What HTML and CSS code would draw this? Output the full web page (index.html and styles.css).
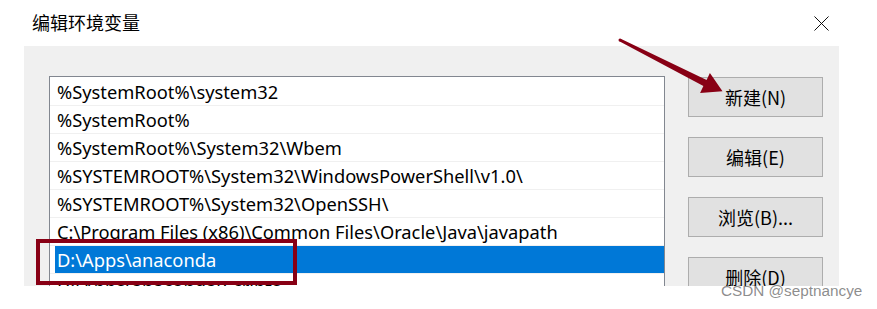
FILE: index.html
```html
<!DOCTYPE html>
<html lang="zh-CN">
<head>
  <meta charset="UTF-8">
  <meta name="viewport" content="width=device-width, initial-scale=1.0">
  <title>编辑环境变量</title>
  <link rel="stylesheet" href="styles.css">
</head>
<body>
  <div class="window">
    <div class="titlebar">
      <span class="title">编辑环境变量</span>
      <svg class="close" width="16" height="16" viewBox="0 0 16 16">
        <path d="M0.5 0.5 L15.5 15.5 M15.5 0.5 L0.5 15.5" stroke="#000" stroke-width="1" fill="none"/>
      </svg>
    </div>
    <div class="panel">
      <div class="list">
        <div class="row"><span class="cell">%SystemRoot%\system32</span></div>
        <div class="row"><span class="cell">%SystemRoot%</span></div>
        <div class="row"><span class="cell">%SystemRoot%\System32\Wbem</span></div>
        <div class="row"><span class="cell">%SYSTEMROOT%\System32\WindowsPowerShell\v1.0\</span></div>
        <div class="row"><span class="cell">%SYSTEMROOT%\System32\OpenSSH\</span></div>
        <div class="row"><span class="cell">C:\Program Files (x86)\Common Files\Oracle\Java\javapath</span></div>
        <div class="row selected"><span class="cell">D:\Apps\anaconda</span></div>
        <div class="row"><span class="cell">D:\Apps\anaconda\Scripts</span></div>
      </div>
      <div class="buttons">
        <button>新建(N)</button>
        <button>编辑(E)</button>
        <button>浏览(B)...</button>
        <button>删除(D)</button>
      </div>
    </div>
  </div>

  <!-- annotations drawn over the screenshot -->
  <div class="mark"></div>
  <svg class="arrow" width="877" height="120" viewBox="0 0 877 120">
    <polygon fill="#880015" points="620.7,38.7 706.6,79.9 709.9,73.1 722.5,91.2 700.1,92.9 703.4,86.1 619.3,41.3"/>
    <circle cx="620" cy="40" r="1.5" fill="#880015"/>
  </svg>
  <div class="watermark">CSDN @septnancye</div>
</body>
</html>
```

FILE: styles.css
```css
body {
  margin: 0;
  background: #fff;
  font-family: "Segoe UI", "Noto Sans", "Noto Sans CJK SC", sans-serif;
  color: #000;
  width: 877px;
  height: 309px;
  position: relative;
  overflow: hidden;
}
.window {
  width: 877px;
}
.titlebar {
  height: 46px;
  display: flex;
  align-items: center;
  justify-content: space-between;
  padding: 0 48px 0 32px;
  box-sizing: border-box;
}
.title {
  font-family: "Noto Sans CJK SC", sans-serif;
  font-size: 18px;
  line-height: 20px;
  margin-top: -2px;
}
.close {
  width: 15px;
  height: 15px;
  margin-top: 1px;
}
.panel {
  margin-left: 24px;
  width: 815px;
  height: 240px;
  box-sizing: border-box;
  background: #f0f0f0;
  padding: 30px 16px 0 25px;
  display: flex;
  gap: 23px;
  overflow: hidden;
}
.list {
  width: 616px;
  height: 300px;
  flex: none;
  box-sizing: border-box;
  background: #fff;
  border: 1px solid #828790;
  padding-top: 1px;
}
.row {
  height: 27px;
  border-bottom: 1px solid #f0f0f0;
  padding-left: 5px;
  display: flex;
}
.cell {
  flex: 1;
  padding-left: 2px;
  font-size: 18.3px;
  line-height: 27px;
  white-space: nowrap;
}
.selected .cell {
  background: #0078d7;
  color: #fff;
}
.buttons {
  width: 135px;
  flex: none;
  display: flex;
  flex-direction: column;
  gap: 20px;
  padding-top: 1px;
}
.buttons button {
  height: 40px;
  flex: none;
  background: #e1e1e1;
  border: 1px solid #adadad;
  font-family: "Segoe UI", "Noto Sans CJK SC", sans-serif;
  font-size: 18px;
  color: #000;
  padding: 0;
}
.mark {
  position: absolute;
  left: 36px;
  top: 239px;
  width: 261px;
  height: 46px;
  box-sizing: border-box;
  border: 4px solid #880015;
}
.arrow {
  position: absolute;
  left: 0;
  top: 0;
}
.watermark {
  position: absolute;
  left: 721px;
  top: 282px;
  font-family: "Liberation Sans", Arial, sans-serif;
  font-size: 15.3px;
  line-height: 17px;
  color: rgba(120, 120, 120, 0.85);
}
```
